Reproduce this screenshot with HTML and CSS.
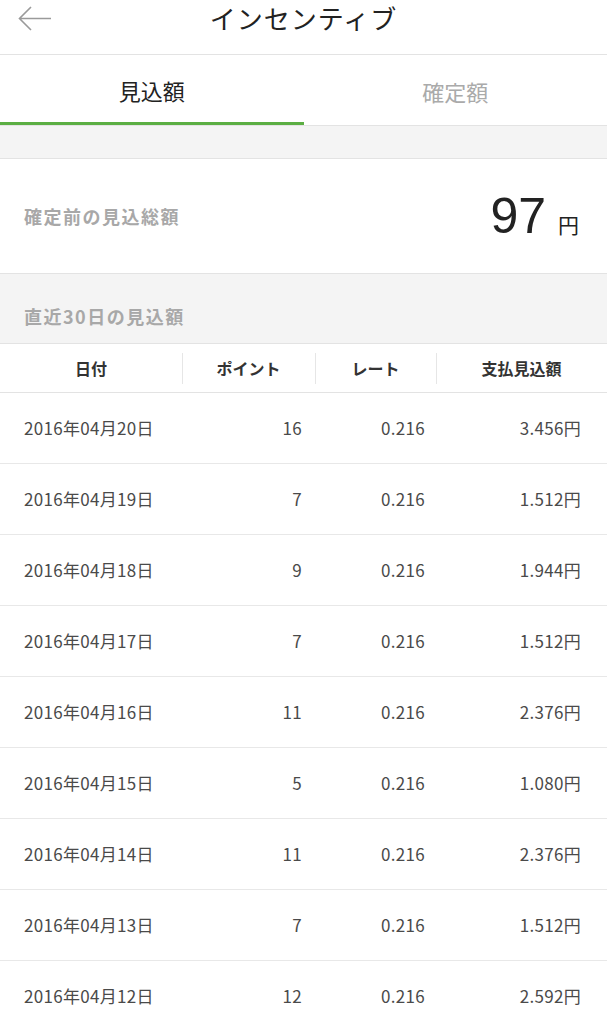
FILE: index.html
```html
<!DOCTYPE html>
<html lang="ja">
<head>
  <meta charset="UTF-8">
  <meta name="viewport" content="width=device-width, initial-scale=1.0">
  <title>インセンティブ</title>
  <link rel="stylesheet" href="styles.css">
</head>
<body>
  <header class="topbar">
    <a class="back" href="#">
      <svg width="36" height="30" viewBox="0 0 36 30">
        <path d="M34 13.5H3M14 2L2.5 13.5L14 25" fill="none" stroke="#9a9a9a" stroke-width="1.6"/>
      </svg>
    </a>
    <h1>インセンティブ</h1>
  </header>

  <nav class="tabs">
    <div class="tab active">見込額</div>
    <div class="tab">確定額</div>
  </nav>

  <div class="spacer"></div>

  <section class="total">
    <span class="total-label">確定前の見込総額</span>
    <span class="total-value">97<small>円</small></span>
  </section>

  <div class="section-title">直近30日の見込額</div>

  <table class="list">
    <thead>
      <tr>
        <th>日付</th>
        <th>ポイント</th>
        <th>レート</th>
        <th>支払見込額</th>
      </tr>
    </thead>
    <tbody>
      <tr><td>2016年04月20日</td><td>16</td><td>0.216</td><td>3.456円</td></tr>
      <tr><td>2016年04月19日</td><td>7</td><td>0.216</td><td>1.512円</td></tr>
      <tr><td>2016年04月18日</td><td>9</td><td>0.216</td><td>1.944円</td></tr>
      <tr><td>2016年04月17日</td><td>7</td><td>0.216</td><td>1.512円</td></tr>
      <tr><td>2016年04月16日</td><td>11</td><td>0.216</td><td>2.376円</td></tr>
      <tr><td>2016年04月15日</td><td>5</td><td>0.216</td><td>1.080円</td></tr>
      <tr><td>2016年04月14日</td><td>11</td><td>0.216</td><td>2.376円</td></tr>
      <tr><td>2016年04月13日</td><td>7</td><td>0.216</td><td>1.512円</td></tr>
      <tr><td>2016年04月12日</td><td>12</td><td>0.216</td><td>2.592円</td></tr>
    </tbody>
  </table>
</body>
</html>
```

FILE: styles.css
```css
body {
  font-family: "Noto Sans CJK JP", "Noto Sans", sans-serif;
  background-color: #fff;
  color: #333;
  margin: 0;
  padding: 0;
  width: 607px;
  overflow: hidden;
}

/* Header */
.topbar {
  position: relative;
  height: 54px;
  border-bottom: 1px solid #e3e3e3;
  display: flex;
  justify-content: center;
  align-items: flex-start;
}

.topbar h1 {
  margin: 0;
  font-size: 26px;
  font-weight: 400;
  line-height: 36px;
  color: #222;
  letter-spacing: 1px;
}

.back {
  position: absolute;
  left: 17px;
  top: 5px;
  display: block;
  line-height: 0;
}

/* Tabs */
.tabs {
  display: flex;
  height: 70px;
  border-bottom: 1px solid #e3e3e3;
}

.tab {
  flex: 1;
  display: flex;
  align-items: center;
  justify-content: center;
  font-size: 22px;
  color: #aaa;
  box-sizing: border-box;
  padding-top: 2px;
}

.tab.active {
  color: #222;
  border-bottom: 3px solid #5bae43;
}

.spacer {
  height: 32px;
  background-color: #f4f4f4;
  border-bottom: 1px solid #e3e3e3;
}

/* Total */
.total {
  height: 114px;
  padding: 0 28px 0 24px;
  display: flex;
  align-items: center;
  justify-content: space-between;
  border-bottom: 1px solid #e3e3e3;
}

.total-label {
  font-size: 18px;
  font-weight: 700;
  letter-spacing: 1.5px;
  color: #a8a8a8;
}

.total-value {
  font-family: "Liberation Sans", Arial, sans-serif;
  font-size: 50px;
  color: #222;
  display: flex;
  align-items: baseline;
}

.total-value small {
  font-family: "Noto Sans CJK JP", sans-serif;
  font-size: 21px;
  margin-left: 12px;
}

.section-title {
  height: 70px;
  box-sizing: border-box;
  padding: 29px 24px 0;
  background-color: #f4f4f4;
  border-bottom: 1px solid #e3e3e3;
  font-size: 18px;
  font-weight: 700;
  letter-spacing: 1.5px;
  color: #a8a8a8;
}

/* Table */
.list {
  width: 100%;
  border-collapse: collapse;
  table-layout: fixed;
}

.list th {
  height: 48px;
  font-size: 16px;
  font-weight: 700;
  color: #333;
  text-align: center;
  border-bottom: 1px solid #e3e3e3;
  padding: 0;
  position: relative;
}

.list th + th::before {
  content: "";
  position: absolute;
  left: 0;
  top: 9px;
  bottom: 8px;
  border-left: 1px solid #e6e6e6;
}

.list th:nth-child(1) { width: 182px; }
.list th:nth-child(2) { width: 133px; }
.list th:nth-child(3) { width: 121px; }

.list td {
  height: 68px;
  padding: 0 0 2px;
  font-size: 17px;
  letter-spacing: 0.3px;
  color: #4a4a4a;
  border-bottom: 1px solid #e8e8e8;
  text-align: right;
}

.list td:nth-child(1) {
  text-align: left;
  padding-left: 24px;
}

.list td:nth-child(2) { padding-right: 13px; }
.list td:nth-child(3) { padding-right: 11px; }
.list td:nth-child(4) { padding-right: 26px; }
```
